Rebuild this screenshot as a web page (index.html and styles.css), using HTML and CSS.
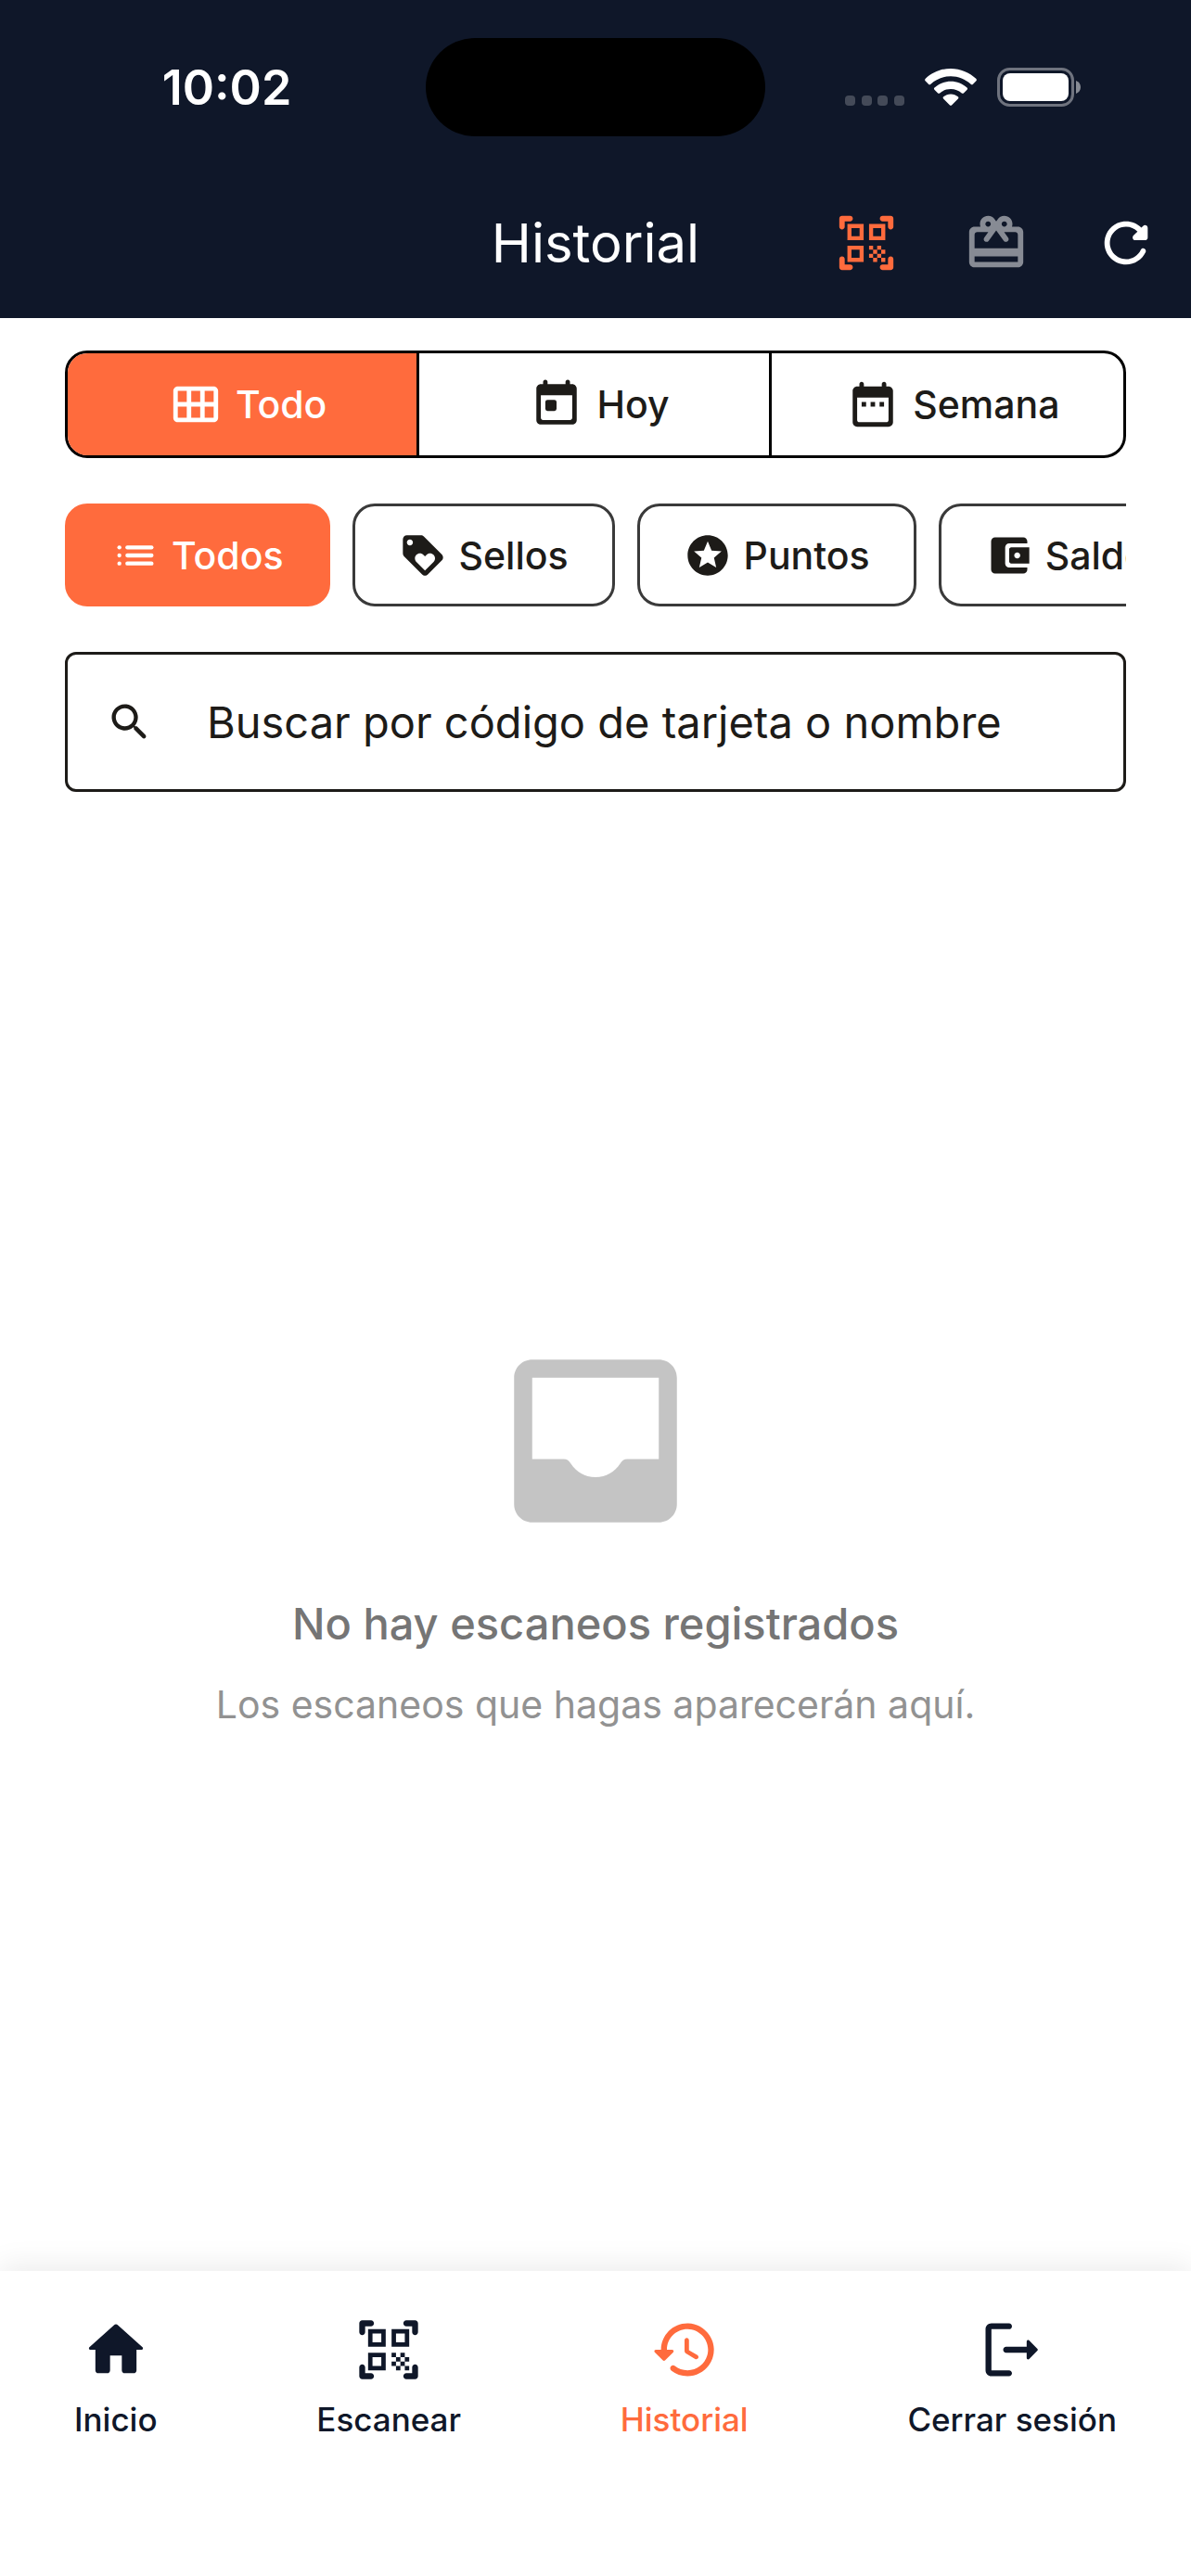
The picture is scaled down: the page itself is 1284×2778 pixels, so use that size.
FILE: index.html
```html
<!DOCTYPE html>
<html lang="es">

<head>
  <meta charset="UTF-8">
  <meta name="viewport" content="width=device-width, initial-scale=1.0">
  <title>Historial</title>
  <link rel="stylesheet" href="styles.css">
</head>

<body>
  <header class="header">
    <div class="status-bar">
      <span class="time">10:02</span>
      <div class="island"></div>
      <div class="status-icons">
        <svg class="signal" viewBox="0 0 64 40" aria-hidden="true">
          <rect x="0" y="29" width="11" height="11" rx="4"/>
          <rect x="18" y="29" width="11" height="11" rx="4"/>
          <rect x="35" y="29" width="11" height="11" rx="4"/>
          <rect x="53" y="29" width="11" height="11" rx="4"/>
        </svg>
        <svg class="wifi" viewBox="0 0 56 40" aria-hidden="true">
          <path d="M28 0C38.500 0 48 4.100 55.200 10.800c.9.800.9 1.700.2 2.500l-3.400 3.400c-.7.700-1.600.7-2.400 0C43.700 11.400 36.200 8.200 28 8.200S12.300 11.400 6.400 16.700c-.8.700-1.700.7-2.400 0L.6 13.300c-.7-.8-.7-1.700.2-2.500C8 4.100 17.500 0 28 0z"/>
          <path d="M28 13.700c6.700 0 12.800 2.500 17.500 6.700.8.700.8 1.600.1 2.400l-3.500 3.500c-.7.700-1.500.7-2.300.1C36.600 23.600 32.500 22 28 22s-8.600 1.600-11.800 4.400c-.8.600-1.600.6-2.300-.1l-3.500-3.500c-.7-.8-.7-1.700.1-2.400 4.700-4.200 10.800-6.700 17.500-6.700z"/>
          <path d="M28 27.400c3 0 5.700 1.100 7.800 2.800.8.700.8 1.500.1 2.300l-6.700 6.800c-.7.700-1.700.7-2.400 0l-6.700-6.800c-.7-.8-.7-1.600.1-2.300 2.100-1.700 4.800-2.800 7.800-2.800z"/>
        </svg>
        <svg class="battery" viewBox="0 0 90 42" aria-hidden="true">
          <rect class="battery-frame" x="1.500" y="1.500" width="80" height="39" rx="12"/>
          <path class="battery-tip" d="M85 14c3.300 1.200 5 3.700 5 7s-1.700 5.800-5 7z"/>
          <rect x="6" y="6" width="71" height="30" rx="8"/>
        </svg>
      </div>
    </div>

    <div class="app-bar">
      <h1>Historial</h1>
      <div class="actions">
        <button class="action active" aria-label="Escanear">
          <svg viewBox="0 0 24 24"><use href="#icon-scan"/></svg>
        </button>
        <button class="action muted" aria-label="Canjes">
          <svg viewBox="0 0 24 24">
            <path fill-rule="evenodd" d="M20 6h-2.180c.11-.31.18-.65.18-1 0-1.660-1.340-3-3-3-1.050 0-1.960.54-2.500 1.350l-.5.67-.5-.68C10.960 2.540 10.050 2 9 2 7.340 2 6 3.340 6 5c0 .35.070.69.180 1H4c-1.110 0-2 .89-2 2v11c0 1.110.89 2 2 2h16c1.110 0 2-.89 2-2V8c0-1.110-.89-2-2-2zm-5-2c.55 0 1 .45 1 1s-.45 1-1 1-1-.45-1-1 .45-1 1-1zM9 4c.55 0 1 .45 1 1s-.45 1-1 1-1-.45-1-1 .45-1 1-1zm11 15H4v-2h16v2zm0-5H4V9c0-.55.45-1 1-1h4.080L7.600 10.020c-.33.45-.23 1.080.22 1.400.44.32 1.070.22 1.390-.22L12 7.400l2.790 3.800c.32.44.95.54 1.390.22.45-.33.55-.95.22-1.400L14.920 8H19c.55 0 1 .45 1 1v5z"/>
          </svg>
        </button>
        <button class="action" aria-label="Actualizar">
          <svg viewBox="0 0 24 24">
            <path d="M17.650 6.350c-1.630-1.630-3.940-2.570-6.480-2.310-3.670.37-6.690 3.350-7.100 7.020C3.520 15.910 7.270 20 12 20c3.190 0 5.930-1.870 7.210-4.560.32-.67-.16-1.440-.9-1.440-.37 0-.72.2-.88.53-1.130 2.430-3.840 3.970-6.800 3.310-2.220-.49-4.010-2.300-4.480-4.520C5.310 9.440 8.260 6 12 6c1.660 0 3.140.69 4.220 1.780l-1.510 1.510c-.63.63-.19 1.710.7 1.710H19c.55 0 1-.45 1-1V6.410c0-.89-1.080-1.340-1.710-.71l-.64.65z"/>
          </svg>
        </button>
      </div>
    </div>
  </header>

  <main class="content">
    <div class="segments">
      <button class="segment selected">
        <svg viewBox="0 0 24 24">
          <path fill-rule="evenodd" d="M20 4H4c-1.100 0-2 .9-2 2v12c0 1.100.9 2 2 2h16c1.100 0 2-.9 2-2V6c0-1.100-.9-2-2-2zM8 11H4V6h4v5zm6 0h-4V6h4v5zm6 0h-4V6h4v5zM8 18H4v-5h4v5zm6 0h-4v-5h4v5zm6 0h-4v-5h4v5z"/>
        </svg>
        Todo
      </button>
      <button class="segment">
        <svg viewBox="0 0 24 24">
          <path fill-rule="evenodd" d="M19 3h-1V2c0-.55-.45-1-1-1s-1 .45-1 1v1H8V2c0-.55-.45-1-1-1s-1 .45-1 1v1H5c-1.110 0-2 .9-2 2v14c0 1.100.89 2 2 2h14c1.100 0 2-.9 2-2V5c0-1.100-.9-2-2-2zm-1 16H6c-.55 0-1-.45-1-1V8h14v10c0 .55-.45 1-1 1z"/>
          <rect x="7" y="10" width="5" height="5" rx="1"/>
        </svg>
        Hoy
      </button>
      <button class="segment">
        <svg viewBox="0 0 24 24">
          <path fill-rule="evenodd" d="M19 4h-1V3c0-.55-.45-1-1-1s-1 .45-1 1v1H8V3c0-.55-.45-1-1-1s-1 .45-1 1v1H5c-1.110 0-2 .9-2 2v14c0 1.100.89 2 2 2h14c1.100 0 2-.9 2-2V6c0-1.100-.9-2-2-2zm0 15c0 .55-.45 1-1 1H6c-.55 0-1-.45-1-1V9h14v10z"/>
          <path d="M7 11h2v2H7zM11 11h2v2h-2zM15 11h2v2h-2z"/>
        </svg>
        Semana
      </button>
    </div>

    <div class="chips">
      <button class="chip selected">
        <svg viewBox="0 0 24 24">
          <circle cx="4" cy="8" r="1"/>
          <circle cx="4" cy="12" r="1"/>
          <circle cx="4" cy="16" r="1"/>
          <rect x="7" y="7" width="14" height="2" rx="1"/>
          <rect x="7" y="11" width="14" height="2" rx="1"/>
          <rect x="7" y="15" width="14" height="2" rx="1"/>
        </svg>
        Todos
      </button>
      <button class="chip">
        <svg viewBox="0 0 24 24">
          <path fill-rule="evenodd" d="M21.410 11.580l-9-9C12.050 2.220 11.550 2 11 2H4c-1.100 0-2 .9-2 2v7c0 .55.22 1.050.59 1.420l9 9c.36.36.86.58 1.410.58s1.050-.22 1.410-.59l7-7c.37-.36.59-.86.59-1.410s-.23-1.060-.59-1.420zM5.500 7C4.670 7 4 6.330 4 5.500S4.670 4 5.500 4 7 4.670 7 5.500 6.330 7 5.500 7zm11.770 8.270L13 19.540l-4.270-4.270C8.280 14.810 8 14.190 8 13.500c0-1.380 1.120-2.500 2.500-2.500.69 0 1.320.28 1.770.74l.73.72.73-.73c.45-.45 1.080-.73 1.770-.73 1.380 0 2.500 1.120 2.500 2.500 0 .69-.28 1.320-.73 1.770z"/>
        </svg>
        Sellos
      </button>
      <button class="chip">
        <svg viewBox="0 0 24 24">
          <path fill-rule="evenodd" d="M11.990 2C6.470 2 2 6.480 2 12s4.470 10 9.990 10C17.520 22 22 17.520 22 12S17.520 2 11.990 2zm4.240 16L12 15.450 7.770 18l1.120-4.810-3.730-3.230 4.920-.42L12 5l1.920 4.530 4.920.42-3.730 3.230L16.230 18z"/>
        </svg>
        Puntos
      </button>
      <button class="chip">
        <svg viewBox="0 0 24 24">
          <path fill-rule="evenodd" d="M10 16V8c0-1.100.89-2 2-2h9V5c0-1.100-.9-2-2-2H5c-1.110 0-2 .9-2 2v14c0 1.100.89 2 2 2h14c1.100 0 2-.9 2-2v-1h-9c-1.110 0-2-.9-2-2zm3-8c-.55 0-1 .45-1 1v6c0 .55.45 1 1 1h9V8h-9zm3 5.500c-.83 0-1.500-.67-1.500-1.500s.67-1.500 1.500-1.500 1.500.67 1.500 1.500-.67 1.500-1.500 1.500z"/>
        </svg>
        Saldo
      </button>
    </div>

    <label class="search">
      <svg viewBox="0 0 24 24" aria-hidden="true">
        <path fill-rule="evenodd" d="M15.500 14h-.79l-.28-.27c1.200-1.400 1.820-3.310 1.480-5.340-.47-2.780-2.790-5-5.590-5.340-4.230-.52-7.790 3.040-7.270 7.270.34 2.800 2.560 5.120 5.340 5.590 2.030.34 3.940-.28 5.340-1.480l.27.28v.79l4.250 4.250c.41.41 1.080.41 1.490 0 .41-.41.41-1.080 0-1.490L15.500 14zm-6 0C7.010 14 5 11.990 5 9.500S7.010 5 9.500 5 14 7.010 14 9.500 11.990 14 9.500 14z"/>
      </svg>
      <input type="text" placeholder="Buscar por código de tarjeta o nombre" aria-label="Buscar por código de tarjeta o nombre">
    </label>

    <section class="empty">
      <svg viewBox="0 0 24 24" aria-hidden="true">
        <path fill-rule="evenodd" d="M19 3H5c-1.100 0-2 .9-2 2v14c0 1.100.9 2 2 2h14c1.100 0 2-.9 2-2V5c0-1.100-.9-2-2-2zM19 14h-3.500c-.35 0-.6.2-.78.5C14.100 15.400 13.200 16 12 16s-2.100-.6-2.720-1.500c-.18-.3-.43-.5-.78-.5H5V5h14z"/>
      </svg>
      <h2>No hay escaneos registrados</h2>
      <p>Los escaneos que hagas aparecerán aquí.</p>
    </section>
  </main>

  <nav class="bottom-nav">
    <a class="nav-item" href="#inicio">
      <svg viewBox="0 0 24 24">
        <path d="M10 19v-5h4v5c0 .55.45 1 1 1h3c.55 0 1-.45 1-1v-7h1.700c.46 0 .68-.57.33-.87L12.670 3.600c-.38-.34-.96-.34-1.340 0l-8.360 7.530c-.34.3-.13.87.33.87H5v7c0 .55.45 1 1 1h3c.55 0 1-.45 1-1z"/>
      </svg>
      Inicio
    </a>
    <a class="nav-item" href="#escanear">
      <svg viewBox="0 0 24 24">
        <g id="icon-scan">
          <path fill-rule="evenodd" d="M5 5h6v6H5zM6.500 6.500v3h3v-3zM13 5h6v6h-6zM14.500 6.500v3h3v-3zM5 13h6v6H5zM6.500 14.500v3h3v-3z"/>
          <path d="M13 13h1.500v1.500H13zM16 13h1.500v1.500H16zM14.500 14.500H16V16h-1.500zM17.500 14.500H19V16h-1.500zM13 16h1.500v1.500H13zM16 16h1.500v1.500H16zM14.500 17.500H16V19h-1.500zM17.500 17.500H19V19h-1.500z"/>
          <path d="M22 6c0 .55-.45 1-1 1s-1-.45-1-1V4h-2c-.55 0-1-.45-1-1s.45-1 1-1h3c.55 0 1 .45 1 1v3z"/>
          <path d="M22 18c0-.55-.45-1-1-1s-1 .45-1 1v2h-2c-.55 0-1 .45-1 1s.45 1 1 1h3c.55 0 1-.45 1-1v-3z"/>
          <path d="M2 18c0-.55.45-1 1-1s1 .45 1 1v2h2c.55 0 1 .45 1 1s-.45 1-1 1H3c-.55 0-1-.45-1-1v-3z"/>
          <path d="M2 6c0 .55.45 1 1 1s1-.45 1-1V4h2c.55 0 1-.45 1-1s-.45-1-1-1H3c-.55 0-1 .45-1 1v3z"/>
        </g>
      </svg>
      Escanear
    </a>
    <a class="nav-item active" href="#historial">
      <svg viewBox="0 0 24 24">
        <path d="M13.260 3C8.170 2.860 4 6.950 4 12H2.210c-.45 0-.67.54-.35.85l2.790 2.800c.2.2.51.2.71 0l2.790-2.800c.31-.31.090-.85-.36-.85H6c0-3.900 3.180-7.050 7.100-7 3.720.05 6.850 3.180 6.900 6.900.05 3.910-3.100 7.100-7 7.100-1.610 0-3.100-.55-4.280-1.480-.4-.31-.96-.28-1.320.08-.42.43-.39 1.130.08 1.500C9 20.290 10.910 21 13 21c5.050 0 9.140-4.170 9-9.260-.13-4.690-4.050-8.610-8.740-8.740zm-.51 5c-.41 0-.75.34-.75.75v3.680c0 .35.19.68.49.86l3.120 1.850c.36.21.82.09 1.030-.26.21-.36.09-.82-.26-1.030l-2.880-1.710v-3.400c0-.4-.34-.74-.75-.74z"/>
      </svg>
      Historial
    </a>
    <a class="nav-item" href="#salir">
      <svg viewBox="0 0 24 24">
        <path d="M5 5h6c.55 0 1-.45 1-1s-.45-1-1-1H5c-1.100 0-2 .9-2 2v14c0 1.100.9 2 2 2h6c.55 0 1-.45 1-1s-.45-1-1-1H5V5z"/>
        <path d="M20.650 11.650l-2.790-2.790c-.32-.32-.86-.1-.86.35V11h-7c-.55 0-1 .45-1 1s.45 1 1 1h7v1.790c0 .45.54.67.85.35l2.790-2.790c.2-.19.2-.51.01-.7z"/>
      </svg>
      Cerrar sesión
    </a>
  </nav>
</body>

</html>
```
FILE: styles.css
```css
* {
  box-sizing: border-box;
}

body {
  display: flex;
  flex-direction: column;
  min-height: 100vh;
  margin: 0;
  background-color: #fff;
  color: #1d1b18;
  font-family: Inter, Roboto, sans-serif;
}

svg {
  display: block;
  flex: none;
  fill: currentColor;
}

button {
  border: none;
  background: none;
  color: inherit;
  font: inherit;
  cursor: pointer;
}

/* Cabecera */
.header {
  background-color: #0f1729;
  color: #fff;
}

.status-bar {
  display: grid;
  grid-template-columns: 1fr 366px 1fr;
  align-items: center;
  padding: 41px 30px 34px;
}

.time {
  font-size: 52px;
  font-weight: 600;
  text-align: center;
}

.island {
  height: 106px;
  border-radius: 53px;
  background-color: #000;
}

.status-icons {
  display: flex;
  justify-content: center;
  align-items: center;
  gap: 22px;
  padding-right: 4px;
}

.signal {
  width: 64px;
  height: 40px;
  opacity: 0.22;
}

.wifi {
  width: 56px;
  height: 40px;
}

.battery {
  width: 90px;
  height: 42px;
}

.battery-frame {
  fill: none;
  stroke: currentColor;
  stroke-width: 3;
  opacity: 0.4;
}

.battery-tip {
  opacity: 0.5;
}

.app-bar {
  display: grid;
  grid-template-columns: 1fr auto 1fr;
  align-items: center;
  height: 162px;
}

.app-bar h1 {
  grid-column: 2;
  margin: 0;
  font-size: 58px;
  font-weight: 400;
}

.actions {
  display: flex;
  justify-content: flex-end;
}

.action {
  display: flex;
  justify-content: center;
  width: 140px;
  padding: 0;
}

.action svg {
  width: 70px;
  height: 70px;
}

.action.active {
  color: #ff6b3d;
}

.action.muted {
  color: #878b94;
}

/* Filtros */
.content {
  display: flex;
  flex: 1;
  flex-direction: column;
  padding: 35px 70px 0;
}

.segments {
  display: grid;
  grid-template-columns: repeat(3, 1fr);
  height: 116px;
  border: 3px solid #000;
  border-radius: 24px;
  overflow: hidden;
}

.segment {
  display: flex;
  justify-content: center;
  align-items: center;
  gap: 14px;
  padding: 0 0 0 12px;
  border-right: 3px solid #000;
  font-size: 41px;
  font-weight: 500;
}

.segment:last-child {
  border-right: none;
}

.segment svg {
  width: 58px;
  height: 58px;
}

.segment.selected,
.chip.selected {
  background-color: #ff6b3d;
  color: #fff;
}

.chips {
  display: flex;
  gap: 24px;
  margin: 49px 0;
  overflow-x: auto;
  scrollbar-width: none;
}

.chip {
  display: flex;
  flex: none;
  align-items: center;
  gap: 13px;
  height: 111px;
  padding: 0 47px;
  border: 3px solid #3a3a3a;
  border-radius: 24px;
  font-size: 41px;
  font-weight: 500;
}

.chip.selected {
  border-color: #ff6b3d;
}

.chip svg {
  width: 52px;
  height: 52px;
}

.search {
  display: flex;
  align-items: center;
  gap: 57px;
  height: 151px;
  padding: 0 41px;
  border: 3px solid #1d1b18;
  border-radius: 12px;
}

.search svg {
  width: 52px;
  height: 52px;
}

.search input {
  flex: 1;
  min-width: 0;
  padding: 0;
  border: none;
  outline: none;
  background: none;
  color: inherit;
  font: inherit;
  font-size: 47px;
}

.search input::placeholder {
  color: #1d1b18;
  opacity: 1;
}

/* Lista vacía */
.empty {
  display: flex;
  flex: 1;
  flex-direction: column;
  justify-content: center;
  align-items: center;
  text-align: center;
}

.empty svg {
  width: 234px;
  height: 234px;
  color: #c4c4c4;
}

.empty h2 {
  margin: 48px 0 26px;
  color: #757575;
  font-size: 47px;
  font-weight: 500;
  line-height: 64px;
}

.empty p {
  margin: 0;
  color: #929292;
  font-size: 41px;
  line-height: 58px;
}

/* Navegación inferior */
.bottom-nav {
  display: flex;
  justify-content: space-between;
  padding: 47px 80px 147px;
  background-color: #fff;
  box-shadow: 0 -6px 30px rgba(0, 0, 0, 0.08);
}

.nav-item {
  display: flex;
  flex-direction: column;
  align-items: center;
  gap: 15px;
  color: #0f1729;
  font-size: 35px;
  font-weight: 500;
  line-height: 44px;
  text-decoration: none;
}

.nav-item svg {
  width: 76px;
  height: 76px;
}

.nav-item.active {
  color: #ff6b3d;
}
```
